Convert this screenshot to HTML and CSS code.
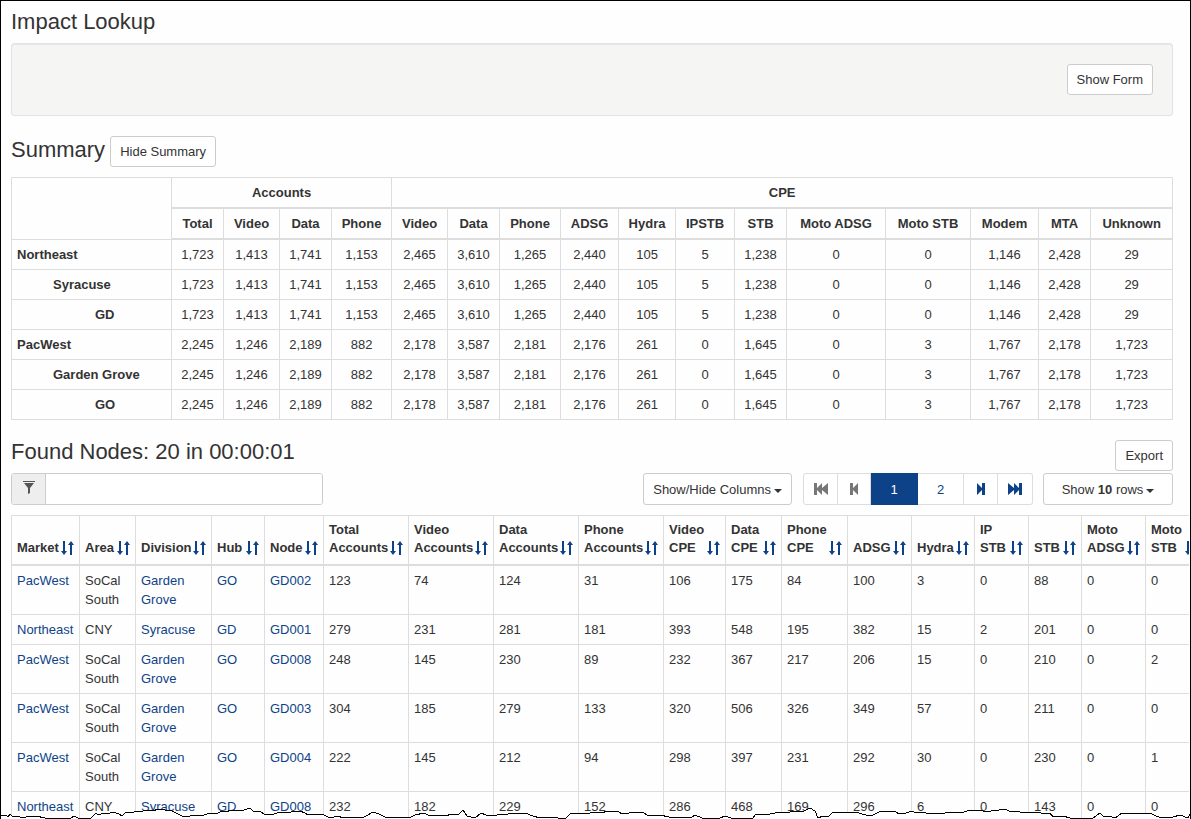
FILE: index.html
```html
<!DOCTYPE html>
<html lang="en">
<head>
<meta charset="utf-8">
<title>Impact Lookup</title>
<link rel="stylesheet" href="styles.css">
</head>
<body>
<svg class="defs" aria-hidden="true">
  <symbol id="sort" viewBox="0 0 13 14"><path d="M2 0h2v10h2L3 14 0 10h2zM9 14h2V4h2L10 0 7 4h2z"/></symbol>
  <symbol id="funnel" viewBox="0 0 12 13"><path d="M0 0h12v1H0zM1 2h10L7 7v5l-2 1V7z"/></symbol>
  <symbol id="step" viewBox="0 0 8 12"><path d="M0 0l5 5V0h3v12H5V7l-5 5z"/></symbol>
  <symbol id="skip" viewBox="0 0 14 12"><path d="M0 0l6 5V0l5 5V0h3v12h-3V7l-5 5V7l-6 5z"/></symbol>
</svg>
<main class="page">
  <h1 class="title">Impact Lookup</h1>
  <section class="well"><button class="btn" type="button">Show Form</button></section>

  <div class="summary-head">
    <h2 class="title">Summary</h2>
    <button class="btn" type="button">Hide Summary</button>
  </div>
  <table class="grid summary">
    <colgroup id="summary-cols"></colgroup>
    <thead>
      <tr><td rowspan="2"></td><th colspan="4">Accounts</th><th colspan="12">CPE</th></tr>
      <tr id="summary-labels"></tr>
    </thead>
    <tbody id="summary-rows"></tbody>
  </table>

  <div class="found-head">
    <h2 class="title">Found Nodes: 20 in 00:00:01</h2>
    <button class="btn" type="button">Export</button>
  </div>
  <div class="toolbar">
    <label class="filter">
      <span class="filter-icon"><svg width="12" height="13"><use href="#funnel"/></svg></span>
      <input type="text" aria-label="Filter nodes">
    </label>
    <div class="tools">
      <button class="btn drop" type="button">Show/Hide Columns <i class="caret"></i></button>
      <nav class="pager" aria-label="Pages">
        <button class="narrow off flip" type="button" aria-label="First"><svg width="14" height="12"><use href="#skip"/></svg></button>
        <button class="narrow off flip" type="button" aria-label="Previous"><svg width="8" height="12"><use href="#step"/></svg></button>
        <button class="current" type="button">1</button>
        <button type="button">2</button>
        <button class="narrow" type="button" aria-label="Next"><svg width="8" height="12"><use href="#step"/></svg></button>
        <button class="narrow" type="button" aria-label="Last"><svg width="14" height="12"><use href="#skip"/></svg></button>
      </nav>
      <button class="btn drop rows" type="button"><span>Show <b>10</b> rows</span> <i class="caret"></i></button>
    </div>
  </div>
  <div class="scroller">
    <table class="grid nodes">
      <colgroup id="node-cols"></colgroup>
      <thead><tr id="node-labels"></tr></thead>
      <tbody id="node-rows"></tbody>
    </table>
  </div>
  <svg class="tear" viewBox="0 0 1191 39" preserveAspectRatio="none" aria-hidden="true">
    <path d="M0 35H6L8 37 10 34 12 36 20 37 23 38 29 36 32 37 36 36 45 38H71L74 36 78 38H91L96 33 98 35 104 33 107 34 113 32 119 34 122 36 126 32 132 33 136 31 141 32 145 30 153 31 158 29 165 30 172 31 178 34 184 37 190 36 197 35 202 36 209 33 216 34 222 31 226 32 231 30 238 31 244 30 250 28 254 32 260 31 265 35 274 34 280 32 288 33 294 31 300 31 305 33 308 35 315 34 324 35 330 38 338 36 343 38 349 37 355 38 364 37 368 35 373 32 379 34 385 37 394 38 400 37 409 38 415 35 424 33 430 36 436 35 445 36 452 34 459 34 463 30 467 36 475 38 481 33 486 35 494 36 500 34 508 34 516 33 525 33 533 36 540 38 549 37 558 38 566 38 570 34 577 33 585 34 590 33 595 32 601 33 608 31 618 31 622 34 629 33 638 32 643 32 648 36 660 35 669 37 682 38 686 37 691 38 695 35 702 38H720L725 36 731 38H753L756 34 770 34 780 32 787 33 793 31 804 31 810 28 815 31 818 38 823 36 828 37 832 33 840 32 848 33 855 32 866 35 873 35 879 32 890 31 895 31 899 34 906 33 912 31 916 33 923 32 929 34 937 33 945 33 950 32 961 33 967 31 974 30 983 31 991 31 999 30 1005 29 1009 31 1020 32 1028 33 1035 32 1041 33 1050 33 1053 37 1063 36 1070 38H1093L1100 33 1104 37 1109 36 1115 38 1122 33 1129 33 1137 34 1145 33 1150 33 1156 36 1162 38 1173 37 1180 35 1188 38 1190 34V40H0z"/>
  </svg>
</main>
<script src="tables.js"></script>
</body>
</html>
```
FILE: styles.css
```css
* { box-sizing: border-box; }
body {
  margin: 0;
  background: #fff;
  color: #333;
  font: 13px/19px "Liberation Sans", Arial, sans-serif;
}
button, input { font: inherit; color: inherit; }
button { cursor: pointer; }
svg { fill: currentColor; }
.defs { position: absolute; width: 0; height: 0; }
.page {
  position: relative;
  height: 100vh;
  overflow: hidden;
  padding: 9px 17px 0 10px;
  border: 1px solid #000;
  border-bottom: 0;
  background: #fefefe;
}
.title { margin: 0; font-size: 22px; font-weight: 400; line-height: 24px; }
.btn {
  padding: 5px 9px;
  border: 1px solid #ccc;
  border-radius: 3px;
  background: #fff;
  white-space: nowrap;
}
.well {
  display: flex;
  justify-content: flex-end;
  margin-top: 9px;
  padding: 20px 19px;
  border: 1px solid #e3e3e3;
  border-radius: 3px;
  background: #f5f5f4;
  box-shadow: inset 0 1px 1px #e5e5e5;
}
.summary-head { display: flex; align-items: flex-start; gap: 5px; margin: 20px 0 10px; }
.summary-head .title { padding-top: 2px; }

.grid {
  table-layout: fixed;
  border-collapse: separate;
  border-spacing: 0;
  border: solid #ddd;
  border-width: 1px 0 0 1px;
}
.grid th, .grid td {
  padding: 5px;
  border: solid #ddd;
  border-width: 0 1px 1px 0;
  vertical-align: top;
}
.grid thead th { border-bottom-width: 2px; }
.summary { width: 100%; }
.summary th, .summary td { padding: 5px 0; text-align: center; }
.summary tbody th { padding: 5px; text-align: left; }
.summary tbody .level-2 { padding-left: 41px; }
.summary tbody .level-3 { padding-left: 83px; }

.found-head { display: flex; justify-content: space-between; margin-top: 20px; }
.toolbar { display: flex; justify-content: space-between; margin: 2px 0 10px; }
.filter { display: flex; width: 312px; height: 32px; border: 1px solid #ccc; border-radius: 3px; overflow: hidden; }
.filter-icon {
  display: flex;
  flex: 0 0 34px;
  justify-content: center;
  padding-top: 7px;
  border-right: 1px solid #ccc;
  background: #eee;
  color: #555;
}
.filter input { flex: 1; min-width: 0; padding: 5px 10px; border: 0; background: #fff; }
.tools { display: flex; }
.drop { display: flex; align-items: center; justify-content: center; gap: 3px; height: 32px; }
.rows { width: 130px; }
.caret { margin-top: 3px; border: 4px solid transparent; border-top-color: #333; border-bottom: 0; }
.pager { display: flex; margin: 0 10px 0 11px; }
.pager button {
  display: flex;
  align-items: center;
  justify-content: center;
  width: 46px;
  height: 32px;
  padding: 0;
  border: 1px solid #ddd;
  border-left-width: 0;
  background: #fff;
  color: #0d4288;
}
.pager .narrow { width: 34px; }
.pager .off { width: 33px; color: #777; }
.pager .flip svg { transform: scaleX(-1); }
.pager .current { width: 47px; border-color: #0d4288; background: #0d4288; color: #fff; }
.pager button:first-child { width: 35px; border-left-width: 1px; border-radius: 3px 0 0 3px; }
.pager button:last-child { width: 35px; border-radius: 0 3px 3px 0; }

.scroller { margin-right: -16px; overflow: hidden; }
.nodes { width: 1193px; }
.nodes thead th { padding-bottom: 7px; line-height: 18px; vertical-align: bottom; }
.nodes a { color: #0d4288; text-decoration: none; }
.sort {
  display: flex;
  align-items: flex-end;
  justify-content: space-between;
  width: 100%;
  padding: 0;
  border: 0;
  background: none;
  font-weight: 700;
  text-align: left;
  white-space: nowrap;
}
.sort svg { flex: none; margin-bottom: 2px; color: #0d4288; }
.tear { position: absolute; left: -1px; bottom: 0; width: calc(100% + 2px); height: 39px; }
.tear path { fill: #fff; stroke: #000; stroke-width: 1; shape-rendering: crispEdges; }
```
FILE: tables.js
```js
const el = id => document.getElementById(id);
const cols = widths => widths.map(w => `<col style="width:${w}px">`).join("");

el("summary-cols").innerHTML = cols([160, 52, 56, 52, 60, 56, 52, 61, 58, 57, 59, 52, 99, 85, 68, 52, 82]);
el("summary-labels").innerHTML =
  "Total,Video,Data,Phone,Video,Data,Phone,ADSG,Hydra,IPSTB,STB,Moto ADSG,Moto STB,Modem,MTA,Unknown"
    .split(",").map(t => `<th>${t}</th>`).join("");

const northeast = "1,723 1,413 1,741 1,153 2,465 3,610 1,265 2,440 105 5 1,238 0 0 1,146 2,428 29";
const pacwest = "2,245 1,246 2,189 882 2,178 3,587 2,181 2,176 261 0 1,645 0 3 1,767 2,178 1,723";
el("summary-rows").innerHTML = [
  ["Northeast", 1, northeast], ["Syracuse", 2, northeast], ["GD", 3, northeast],
  ["PacWest", 1, pacwest], ["Garden Grove", 2, pacwest], ["GO", 3, pacwest]
].map(([name, level, values]) =>
  `<tr><th class="level-${level}">${name}</th>` +
  values.split(" ").map(v => `<td>${v}</td>`).join("") + "</tr>").join("");

el("node-cols").innerHTML = cols([68, 56, 76, 53, 59, 85, 85, 85, 85, 62, 56, 66, 64, 63, 54, 53, 64, 58]);
el("node-labels").innerHTML = [
  "Market", "Area", "Division", "Hub", "Node", "Total<br>Accounts", "Video<br>Accounts",
  "Data<br>Accounts", "Phone<br>Accounts", "Video<br>CPE", "Data<br>CPE", "Phone<br>CPE",
  "ADSG", "Hydra", "IP<br>STB", "STB", "Moto<br>ADSG", "Moto<br>STB"
].map(t => `<th><button class="sort" type="button"><span>${t}</span>` +
  `<svg width="13" height="14"><use href="#sort"/></svg></button></th>`).join("");

const west = ["PacWest", "SoCal<br>South", "Garden<br>Grove", "GO"];
const east = ["Northeast", "CNY", "Syracuse", "GD"];
el("node-rows").innerHTML = [
  [west, "GD002", "123 74 124 31 106 175 84 100 3 0 88 0 0"],
  [east, "GD001", "279 231 281 181 393 548 195 382 15 2 201 0 0"],
  [west, "GD008", "248 145 230 89 232 367 217 206 15 0 210 0 2"],
  [west, "GD003", "304 185 279 133 320 506 326 349 57 0 211 0 0"],
  [west, "GD004", "222 145 212 94 298 397 231 292 30 0 230 0 1"],
  [east, "GD008", "232 182 229 152 286 468 169 296 6 0 143 0 0"]
].map(([place, node, values]) =>
  "<tr>" + [...place, node].map((t, i) =>
    i === 1 ? `<td>${t}</td>` : `<td><a href="#">${t}</a></td>`).join("") +
  values.split(" ").map(v => `<td>${v}</td>`).join("") + "</tr>").join("");
```
